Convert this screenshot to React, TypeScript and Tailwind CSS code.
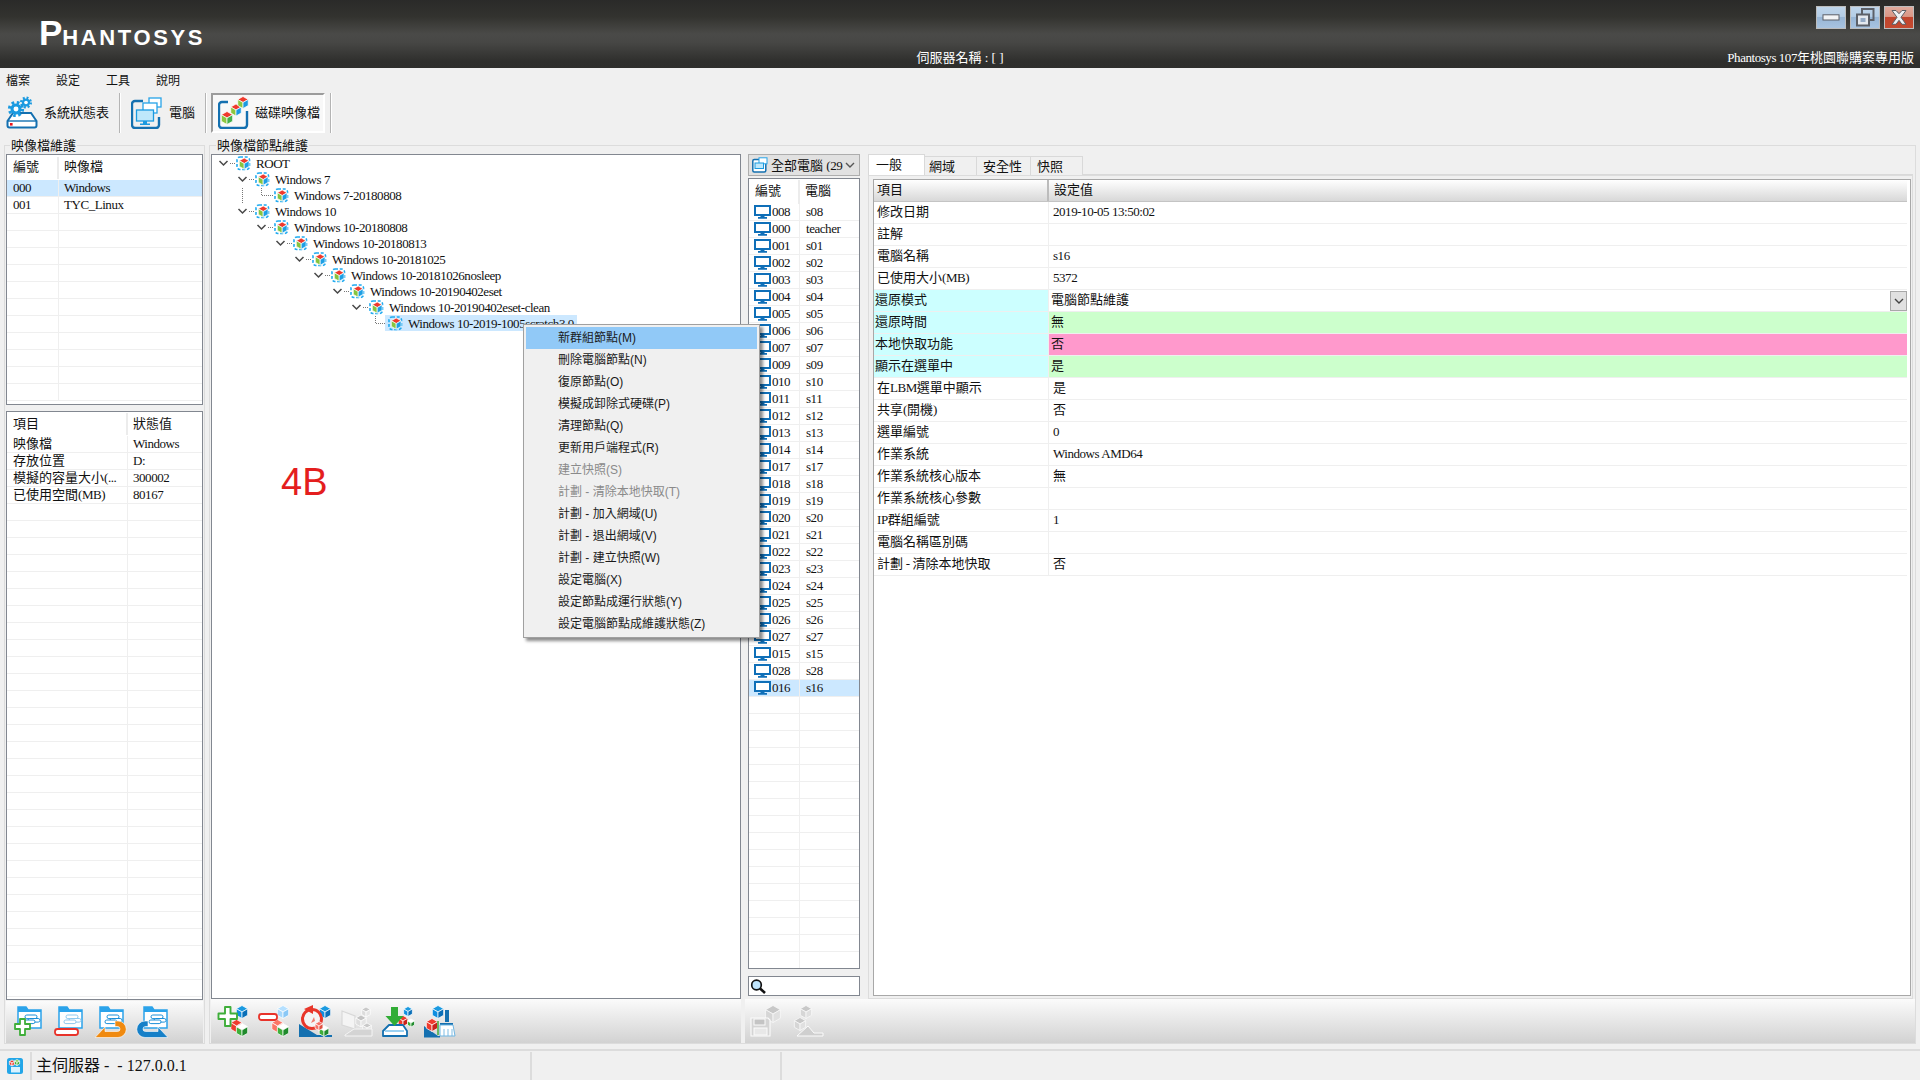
import React from "react";

const BL = "#1b9ae0", RD = "#ee3b2e", GR = "#3fae3a", DK = "#1470b0";

function T({ s }: { s: string }) {
  return (
    <>
      {s.split(/([\x00-\x7f]+)/).map((p, i) =>
        p === "" ? null : /^[\x00-\x7f]/.test(p) ? (
          <span key={i} className="tracking-[-0.45px]">{p}</span>
        ) : (
          <span key={i}>{p}</span>
        )
      )}
    </>
  );
}

function Cube({ x, y, r, t = RD, a = "#8cc63f", b = BL, line = "#fff" }: { x: number; y: number; r: number; t?: string; a?: string; b?: string; line?: string }) {
  const w = r * 0.87, h = r * 0.5;
  return (
    <g stroke={line} strokeWidth={0.7} strokeLinejoin="round">
      <polygon fill={t} points={`${x},${y - r} ${x + w},${y - h} ${x},${y} ${x - w},${y - h}`} />
      <polygon fill={a} points={`${x - w},${y - h} ${x},${y} ${x},${y + r} ${x - w},${y + h}`} />
      <polygon fill={b} points={`${x + w},${y - h} ${x},${y} ${x},${y + r} ${x + w},${y + h}`} />
    </g>
  );
}

function Gear({ x, y, r }: { x: number; y: number; r: number }) {
  const c = 2 * Math.PI * r;
  return (
    <g>
      <circle cx={x} cy={y} r={r} fill="none" stroke={BL} strokeWidth={r * 0.5} strokeDasharray={`${c / 16} ${c / 16}`} />
      <circle cx={x} cy={y} r={r * 0.85} fill={BL} />
      <circle cx={x} cy={y} r={r * 0.38} fill="#fff" />
    </g>
  );
}

function TreeIcon() {
  return (
    <svg width="15" height="15" viewBox="0 0 15 15" className="shrink-0">
      <rect x="1" y="1" width="12.5" height="12.5" rx="3" fill="none" stroke="#1faaf0" strokeWidth="1.6" strokeDasharray="3 1.7" />
      <Cube x={8.2} y={7.6} r={5.6} t="#ef3a2d" a="#86c440" b="#1d9fe4" />
    </svg>
  );
}

function Monitor() {
  return (
    <svg width="17" height="14" viewBox="0 0 17 14" className="shrink-0">
      <rect x="1" y="1" width="15" height="9" fill="#fff" stroke="#0f6fb8" strokeWidth="2" />
      <path d="M6.5 10.5h4v1.5h-4zM4 12h9v1.7H4z" fill="#0f6fb8" />
    </svg>
  );
}

function TbGears() {
  return (
    <svg width="32" height="33" viewBox="0 0 32 33">
      <path d="M1.5 25 7 17H25l5.5 8v4.5a2 2 0 0 1-2 2h-25a2 2 0 0 1-2-2z" fill="#fff" stroke={DK} strokeWidth="2" />
      <path d="M2 25h28" stroke={DK} strokeWidth="1.4" />
      <rect x="4" y="27" width="2.6" height="2.6" fill="#e8141c" />
      <Gear x={10} y={13} r={6.5} />
      <Gear x={20} y={6.5} r={4.8} />
    </svg>
  );
}

function TbMonitors() {
  return (
    <svg width="31" height="32" viewBox="0 0 31 32">
      <path d="M12 4H4a3 3 0 0 0-3 3v21a3 3 0 0 0 3 3h21a3 3 0 0 0 3-3v-8" fill="none" stroke={DK} strokeWidth="2.4" />
      <rect x="18" y="1" width="12" height="9" fill="#fff" stroke="#27a4e8" strokeWidth="1.3" />
      <rect x="12" y="6" width="14" height="10" fill="#fff" stroke="#27a4e8" strokeWidth="1.3" />
      <rect x="5.5" y="13" width="17" height="11" fill="#bfe8fb" stroke="#1b9ae0" strokeWidth="1.3" />
      <path d="M12 24h4v2.5h-4zM9 26.5h10V28H9z" fill="#1b9ae0" />
    </svg>
  );
}

function TbDisks() {
  return (
    <svg width="31" height="33" viewBox="0 0 31 33">
      <path d="M10 6H4a3 3 0 0 0-3 3v20a3 3 0 0 0 3 3h22a3 3 0 0 0 3-3V15" fill="none" stroke={DK} strokeWidth="2.4" />
      <Cube x={9} y={22} r={6.5} t="#ef3a2d" a="#8cc63f" b="#45b04a" />
      <Cube x={18} y={14} r={6} t="#ef3a2d" a="#8cc63f" b={BL} />
      <Cube x={25} y={6.5} r={6} t="#ef3a2d" a="#8cc63f" b={BL} />
    </svg>
  );
}

function Folder({ faded = false }: { faded?: boolean }) {
  const c = faded ? "#8fc9ee" : "#1b8fd8";
  return (
    <g>
      <path d="M5 1h8l2 3h13v18H5z" fill="#fff" stroke="#2ba3ea" strokeWidth="1.5" />
      <path d="M5 1h8l2 3h13v2H5z" fill="#2ba3ea" />
      <rect x="12" y="9" width="12" height="3.6" rx="1.8" fill="#fff" stroke={c} strokeWidth="1" />
      <rect x="15" y="12.5" width="12" height="3.6" rx="1.8" fill="#fff" stroke={c} strokeWidth="1" />
      <rect x="10" y="14" width="12" height="3.6" rx="1.8" fill="#fff" stroke={c} strokeWidth="1" />
    </g>
  );
}

function FolderAdd() {
  return (
    <svg width="32" height="33" viewBox="0 0 32 33">
      <Folder />
      <path d="M7 13h5v5h5v5h-5v6H7v-6H2v-5h5z" fill="#fff" stroke={GR} strokeWidth="1.8" strokeLinejoin="round" />
    </svg>
  );
}
function FolderRemove() {
  return (
    <svg width="32" height="33" viewBox="0 0 32 33">
      <Folder faded />
      <rect x="1" y="23" width="23" height="6" rx="2.5" fill="#fff" stroke="#e8332a" strokeWidth="1.8" />
    </svg>
  );
}
const ARROW = "M0 31.5 L10 21 V25.5 H22.5 a2.5 2.5 0 0 0 0-5 H20 V15 H23 a8.2 8.2 0 0 1 0 16.5z";
function FolderArrow({ color, flip }: { color: string; flip?: boolean }) {
  return (
    <svg width="32" height="33" viewBox="0 0 32 33">
      <g transform={flip ? "translate(3 0)" : undefined}>
        <Folder />
      </g>
      <g transform={flip ? "translate(32 0) scale(-1 1)" : undefined}>
        <path d={ARROW} fill={color} stroke="#fff" strokeWidth="0.6" />
      </g>
    </svg>
  );
}

function CubeAdd() {
  return (
    <svg width="32" height="33" viewBox="0 0 32 33">
      <Cube x={25} y={7} r={6.5} t={BL} a="#0f8ee0" b="#0a6fb8" />
      <Cube x={19.5} y={21} r={6.5} t={RD} a={RD} b="#c8221c" />
      <Cube x={25} y={25} r={6.5} t="#ffffff" a={GR} b="#1f8a2c" />
      <path d="M8 2h5.5v6.5H20V14h-6.5v7H8v-7H1.5V8.5H8z" fill="#fff" stroke={GR} strokeWidth="1.9" strokeLinejoin="round" />
    </svg>
  );
}
function CubeRemove() {
  return (
    <svg width="32" height="33" viewBox="0 0 32 33">
      <Cube x={25} y={7} r={6.5} t="#b5e0ff" a="#a6d8fb" b="#8ac8f6" />
      <Cube x={19.5} y={21} r={6.5} t="#fb7565" a="#fb7565" b="#ea5a4a" />
      <Cube x={25} y={25} r={6.5} t="#fff" a={GR} b="#1f8a2c" />
      <rect x="1" y="9" width="18" height="6" rx="2.5" fill="#fff" stroke="#e8332a" strokeWidth="1.8" />
    </svg>
  );
}
function CubeRestore() {
  return (
    <svg width="33" height="33" viewBox="0 0 33 33">
      <path d="M0 19 18 30 33 30V32H0z" fill={DK} />
      <Cube x={26} y={7} r={6.5} t={BL} a="#0f8ee0" b="#0a6fb8" />
      <circle cx="13" cy="14" r="9.5" fill="#f4f4f4" stroke="#e8362a" strokeWidth="3" />
      <path d="M5 4 14 0v9z" fill="#e8362a" />
      <path d="M12 18l3-6 1 4z" fill="#f07a6e" />
      <Cube x={25} y={26} r={5.5} t="#fff" a={GR} b="#1f8a2c" />
      <Cube x={20} y={21} r={4.5} t="#f67065" a="#f67065" b="#e05040" />
    </svg>
  );
}
function CubeDisabled() {
  return (
    <svg width="32" height="33" viewBox="0 0 32 33">
      <path d="M1 6l13 5v13L1 20z" fill="#f4f4f4" stroke="#d8d8d8" strokeWidth="1.2" />
      <Cube x={25} y={7} r={5} t="#c9c9c9" a="#dcdcdc" b="#e6e6e6" />
      <Cube x={20} y={16} r={6} t="#c4c4c4" a="#dddddd" b="#e4e4e4" />
      <Cube x={26} y={23} r={5} t="#c9c9c9" a="#dcdcdc" b="#e6e6e6" />
      <path d="M4 30l9-6h18v7H4z" fill="#d4d4d4" stroke="#f5f5f5" strokeWidth="1" />
    </svg>
  );
}
function CubeDownload() {
  return (
    <svg width="33" height="33" viewBox="0 0 33 33">
      <Cube x={26} y={6.5} r={5} t={BL} a="#0f8ee0" b="#0a6fb8" />
      <Cube x={21} y={16} r={5.5} t={RD} a={RD} b="#c8221c" />
      <Cube x={29} y={18} r={4} t="#fff" a={GR} b="#1f8a2c" />
      <path d="M1 31v-5l6-6h14l4 6v5z" fill="#fff" stroke={DK} strokeWidth="1.8" strokeLinejoin="round" />
      <path d="M3 26h19" stroke="#9bd1f2" strokeWidth="2" />
      <path d="M9 2h7v9h5.5L12.5 21 3.5 11H9z" fill="#31ad36" />
    </svg>
  );
}
function CubeClean() {
  return (
    <svg width="33" height="33" viewBox="0 0 33 33">
      <path d="M0 21 14 31H0z" fill={DK} />
      <Cube x={14} y={7} r={6.5} t={BL} a="#0f8ee0" b="#0a6fb8" />
      <Cube x={8} y={20} r={6.5} t={RD} a={RD} b="#c8221c" />
      <path d="M14 16v14" stroke="#3fae3a" strokeWidth="1.5" />
      <path d="M21 5h4v12h-4zM16 18h13v2H16z" fill={DK} />
      <path d="M16 20h13l2 11H16z" fill="#fff" stroke="#6fb5e2" strokeWidth="1" />
      <path d="M20 24v7M24 24v7M28 24v7" stroke="#6fb5e2" strokeWidth="0.9" />
      <path d="M0 31h16v1.5H0z" fill={DK} />
    </svg>
  );
}
function DisabledSave() {
  return (
    <svg width="33" height="33" viewBox="0 0 33 33">
      <Cube x={23} y={9} r={8.5} t="#c8c8c8" a="#d6d6d6" b="#e0e0e0" line="#fbfbfb" />
      <path d="M1 13h17l2 2v16H1z" fill="#d4d4d4" stroke="#fbfbfb" strokeWidth="1.1" />
      <rect x="4" y="14" width="11" height="6" fill="#c4c4c4" stroke="#fbfbfb" strokeWidth="1" />
      <rect x="4" y="23" width="13" height="7" fill="#e8e8e8" stroke="#fbfbfb" strokeWidth="1" />
    </svg>
  );
}
function DisabledCubes() {
  return (
    <svg width="33" height="33" viewBox="0 0 33 33">
      <Cube x={14} y={7} r={6.5} t="#c8c8c8" a="#d6d6d6" b="#e0e0e0" line="#fbfbfb" />
      <Cube x={8} y={19} r={6.5} t="#c8c8c8" a="#d6d6d6" b="#e0e0e0" line="#fbfbfb" />
      <path d="M5 31l11-10 6 7h9v3z" fill="#cfcfcf" stroke="#fbfbfb" strokeWidth="1" />
    </svg>
  );
}

function StatusIcon() {
  return (
    <svg width="16" height="16" viewBox="0 0 16 16">
      <rect width="16" height="16" rx="2.5" fill="#23a6e8" />
      <rect x="4" y="9" width="9" height="5.5" fill="#d8f2ff" />
      <Cube x={5} y={5} r={3} t={RD} a={RD} b={RD} line="#fff" />
      <Cube x={10} y={4.5} r={3} t="#7ac943" a="#3fae3a" b="#3fae3a" line="#fff" />
    </svg>
  );
}

function Chevron({ color = "#444" }: { color?: string }) {
  return (
    <svg width="10" height="6" viewBox="0 0 10 6">
      <path d="M1 1l4 4 4-4" fill="none" stroke={color} strokeWidth="1.4" />
    </svg>
  );
}

function Search() {
  return (
    <svg width="17" height="15" viewBox="0 0 17 15">
      <circle cx="6.5" cy="6" r="4.8" fill="#bfe4fb" stroke="#111" strokeWidth="1.7" />
      <path d="M10 9.5l5 4.5" stroke="#111" strokeWidth="2.6" />
    </svg>
  );
}

function WinBtn({ kind }: { kind: "min" | "max" | "close" }) {
  if (kind === "close")
    return (
      <div className="w-[30px] h-[23px] border border-[#bdbdbd] bg-[linear-gradient(#dfa99c_0%,#d99786_45%,#c0452d_50%,#c44a30_100%)] flex items-center justify-center">
        <svg width="20" height="17" viewBox="0 0 20 17">
          <path d="M3 1.5h4l3 3.2 3-3.2h4l-5 6.8 5 7h-4l-3-4-3 4H3l5-7z" fill="#eef0f3" stroke="#5c5f66" strokeWidth="1" strokeLinejoin="round" />
        </svg>
      </div>
    );
  return (
    <div className="w-[30px] h-[23px] border border-[#bdbdbd] bg-[linear-gradient(#bfd5ea_0%,#b4cde6_45%,#98b6d6_50%,#a8c3e0_100%)] flex items-center justify-center">
      {kind === "min" ? (
        <svg width="18" height="7" viewBox="0 0 18 7">
          <rect x="1" y="0.8" width="16" height="5.2" fill="#f2f4f6" stroke="#5c6068" strokeWidth="1" />
        </svg>
      ) : (
        <svg width="20" height="19" viewBox="0 0 20 19">
          <rect x="7" y="1" width="11.5" height="11" fill="none" stroke="#5c6068" strokeWidth="2" />
          <rect x="2" y="6.5" width="12" height="11" fill="#e4e8ee" stroke="#5c6068" strokeWidth="2" />
          <rect x="5.5" y="10" width="5" height="4" fill="#93a9c4" />
        </svg>
      )}
    </div>
  );
}

function ToolSep() {
  return <div className="w-[2px] h-[40px] bg-[#b4b4b4] border-r border-white shrink-0" />;
}

const leftRows: [string, string][] = [["000", "Windows"], ["001", "TYC_Linux"]];
const infoRows: [string, string][] = [["映像檔", "Windows"], ["存放位置", "D:"], ["模擬的容量大小(...", "300002"], ["已使用空間(MB)", "80167"]];

function SmallList({ head, rows, col, total, selected, className, headH }: { head: [string, string]; rows: [string, string][]; col: string; total: number; selected?: number; className: string; headH: string }) {
  const blank = Array.from({ length: total - rows.length }, (_, i) => i);
  return (
    <div className={`border border-[#828790] bg-white overflow-hidden ${className}`}>
      <div className={`flex items-center ${headH}`}>
        <div className={`${col} h-[22px] pl-[6px] pb-[2px] flex items-center border-r-2 border-[#ececec]`}>{head[0]}</div>
        <div className="flex-1 pl-[5px] pb-[2px]">{head[1]}</div>
      </div>
      {rows.map((r, i) => (
        <div key={i} className={`flex h-[17px] border-b border-[#efefef] ${selected === i ? "bg-[#cce8ff]" : ""}`}>
          <div className={`${col} pl-[6px] pb-[2px] flex items-center border-r border-[#efefef]`}><span><T s={r[0]} /></span></div>
          <div className="flex-1 pl-[5px] pb-[2px] flex items-center"><span><T s={r[1]} /></span></div>
        </div>
      ))}
      {blank.map((i) => (
        <div key={i} className="flex h-[17px] border-b border-[#efefef]">
          <div className={`${col} border-r border-[#efefef]`} />
        </div>
      ))}
    </div>
  );
}

const tree: { label: string; d: number; leaf?: boolean; sib?: boolean; sel?: boolean }[] = [
  { label: "ROOT", d: 0 },
  { label: "Windows 7", d: 1 },
  { label: "Windows 7-20180808", d: 2, leaf: true, sib: true },
  { label: "Windows 10", d: 1 },
  { label: "Windows 10-20180808", d: 2 },
  { label: "Windows 10-20180813", d: 3 },
  { label: "Windows 10-20181025", d: 4 },
  { label: "Windows 10-20181026nosleep", d: 5 },
  { label: "Windows 10-20190402eset", d: 6 },
  { label: "Windows 10-20190402eset-clean", d: 7 },
  { label: "Windows 10-2019-1005scratch3.0", d: 8, leaf: true, sel: true },
];

function TreeRow({ n }: { n: (typeof tree)[number] }) {
  const w = 21 + 19 * n.d;
  const cx = 9 + 19 * n.d;
  return (
    <div className="flex h-[16px] items-center pl-[3px]">
      <svg width={w} height={16} className="shrink-0">
        {n.leaf ? (
          <path d={`M${cx - 0.5} 1V8.5H${w}`} fill="none" stroke="#777" strokeDasharray="1 1" />
        ) : (
          <>
            <path d={`M${cx - 4.5} 6l4 4 4-4`} fill="none" stroke="#484848" strokeWidth="1.5" />
            <path d={`M${cx + 6} 8.5H${w}`} fill="none" stroke="#777" strokeDasharray="1 1" />
          </>
        )}
        {n.sib && <path d={`M${cx - 19.5} 1V16`} fill="none" stroke="#777" strokeDasharray="1 1" />}
      </svg>
      <div className={`flex items-center h-[16px] pl-[3px] pr-[3px] -ml-[3px] ${n.sel ? "bg-[#cce8ff]" : ""}`}>
        <TreeIcon />
        <span className="ml-[5px] whitespace-nowrap tracking-[-0.45px]">{n.label}</span>
      </div>
    </div>
  );
}

const computers: [string, string][] = [
  ["008", "s08"], ["000", "teacher"], ["001", "s01"], ["002", "s02"], ["003", "s03"], ["004", "s04"], ["005", "s05"], ["006", "s06"], ["007", "s07"], ["009", "s09"],
  ["010", "s10"], ["011", "s11"], ["012", "s12"], ["013", "s13"], ["014", "s14"], ["017", "s17"], ["018", "s18"], ["019", "s19"], ["020", "s20"], ["021", "s21"],
  ["022", "s22"], ["023", "s23"], ["024", "s24"], ["025", "s25"], ["026", "s26"], ["027", "s27"], ["015", "s15"], ["028", "s28"], ["016", "s16"],
];

type Prop = { k: string; v: string; kc?: string; vc?: string; combo?: boolean };
const props: Prop[] = [
  { k: "修改日期", v: "2019-10-05 13:50:02" },
  { k: "註解", v: "" },
  { k: "電腦名稱", v: "s16" },
  { k: "已使用大小(MB)", v: "5372" },
  { k: "還原模式", v: "電腦節點維護", kc: "bg-[#ccffff]", combo: true },
  { k: "還原時間", v: "無", kc: "bg-[#ccffff]", vc: "bg-[#ccffcc]" },
  { k: "本地快取功能", v: "否", kc: "bg-[#ccffff]", vc: "bg-[#ff99cc]" },
  { k: "顯示在選單中", v: "是", kc: "bg-[#ccffff]", vc: "bg-[#ccffcc]" },
  { k: "在LBM選單中顯示", v: "是" },
  { k: "共享(開機)", v: "否" },
  { k: "選單編號", v: "0" },
  { k: "作業系統", v: "Windows AMD64" },
  { k: "作業系統核心版本", v: "無" },
  { k: "作業系統核心參數", v: "" },
  { k: "IP群組編號", v: "1" },
  { k: "電腦名稱區別碼", v: "" },
  { k: "計劃 - 清除本地快取", v: "否" },
];

const menu: [string, boolean?][] = [
  ["新群組節點(M)"], ["刪除電腦節點(N)"], ["復原節點(O)"], ["模擬成卸除式硬碟(P)"], ["清理節點(Q)"], ["更新用戶端程式(R)"],
  ["建立快照(S)", true], ["計劃 - 清除本地快取(T)", true], ["計劃 - 加入網域(U)"], ["計劃 - 退出網域(V)"], ["計劃 - 建立快照(W)"],
  ["設定電腦(X)"], ["設定節點成運行狀態(Y)"], ["設定電腦節點成維護狀態(Z)"],
];

export default function App() {
  return (
    <div className="relative w-[1920px] h-[1080px] overflow-hidden flex flex-col bg-[#f0f0f0] text-[#111] text-[13px] leading-none font-['Liberation_Serif','Noto_Sans_CJK_TC',serif]">
      {/* title bar */}
      <div className="h-[68px] shrink-0 grid grid-cols-3 text-white bg-[linear-gradient(#2a2a29_0%,#33332f_25%,#4a4a48_50%,#474745_62%,#2f2f2d_90%,#2e2e2c_100%)]">
        <div className="pl-[39px] pt-[15px]">
          <div className="flex items-baseline font-['Liberation_Sans',sans-serif] font-bold leading-none h-[32px]">
            <span className="text-[35px]">P</span>
            <span className="text-[22px] tracking-[2.6px]">HANTOSYS</span>
          </div>
        </div>
        <div className="flex items-end justify-center pb-[4px]"><span>伺服器名稱 : [ ]</span></div>
        <div className="flex flex-col items-end justify-between pr-[6px] pt-[6px] pb-[4px]">
          <div className="flex gap-[4px]">
            <WinBtn kind="min" />
            <WinBtn kind="max" />
            <WinBtn kind="close" />
          </div>
          <div><T s="Phantosys 107" />年桃園聯購案專用版</div>
        </div>
      </div>

      {/* menu */}
      <div className="h-[24px] shrink-0 flex items-center pl-[6px] pt-[2px] gap-[26px] text-[12px] font-['Liberation_Sans','Noto_Sans_CJK_TC',sans-serif]">
        <span>檔案</span>
        <span>設定</span>
        <span>工具</span>
        <span>說明</span>
      </div>

      {/* toolbar */}
      <div className="h-[41px] shrink-0 flex items-center">
        <div className="w-[119px] flex items-center pl-[6px] gap-[6px]">
          <TbGears />
          <span>系統狀態表</span>
        </div>
        <ToolSep />
        <div className="w-[84px] flex items-center pl-[10px] gap-[7px]">
          <TbMonitors />
          <span>電腦</span>
        </div>
        <ToolSep />
        <div className="ml-[4px] w-[114px] h-[40px] flex items-center pl-[5px] gap-[6px] border-2 border-t-[#9c9c9c] border-l-[#9c9c9c] border-b-white border-r-white bg-[#f8f8f8]">
          <TbDisks />
          <span>磁碟映像檔</span>
        </div>
        <div className="w-[5px]" />
        <ToolSep />
      </div>

      {/* main */}
      <div className="flex-1 min-h-0 flex pl-[4px] pr-[4px] pt-[12px] pb-[5px] gap-[4px]">
        {/* left group */}
        <div className="w-[201px] shrink-0 border border-[#dcdcdc] flex flex-col">
          <div className="-mt-[9px] ml-[5px] h-[16px] w-fit bg-[#f0f0f0] flex items-center px-[1px]">映像檔維護</div>
          <div className="mt-[1px] mx-[1px] flex flex-col gap-[6px]">
            <SmallList head={["編號", "映像檔"]} rows={leftRows} col="w-[52px]" total={13} selected={0} className="h-[251px]" headH="h-[25px]" />
            <SmallList head={["項目", "狀態值"]} rows={infoRows} col="w-[121px]" total={34} className="h-[589px]" headH="h-[24px]" />
          </div>
          <div className="mt-[1px] mx-[1px] flex-1 flex items-center pl-[7px] gap-[9px] bg-[linear-gradient(#fbfbfb,#d2d2d2)]">
            <FolderAdd />
            <FolderRemove />
            <FolderArrow color="#f08a10" />
            <FolderArrow color="#1680c8" flip />
          </div>
        </div>

        {/* main group */}
        <div className="flex-1 min-w-0 border border-[#dcdcdc] flex flex-col">
          <div className="-mt-[9px] ml-[6px] h-[16px] w-fit bg-[#f0f0f0] flex items-center px-[1px]">映像檔節點維護</div>
          <div className="mt-[1px] flex h-[845px] pl-[1px]">
            {/* tree */}
            <div className="w-[530px] shrink-0 border border-[#828790] bg-white overflow-hidden">
              {tree.map((n) => (
                <TreeRow key={n.label} n={n} />
              ))}
            </div>

            {/* computers */}
            <div className="ml-[7px] w-[112px] shrink-0 flex flex-col">
              <div className="h-[22px] shrink-0 border border-[#adadad] bg-[#e1e1e1] flex items-center pl-[3px] pr-[4px]">
                <svg width="16" height="16" viewBox="0 0 16 16" className="shrink-0">
                  <rect x="0.8" y="2.5" width="13" height="12.5" rx="1.5" fill="#fff" stroke={DK} strokeWidth="1.5" />
                  <rect x="7" y="0.8" width="8" height="6" fill="#fff" stroke="#27a4e8" strokeWidth="1" />
                  <rect x="3" y="6" width="8.5" height="5.5" fill="#bfe8fb" stroke="#1b9ae0" strokeWidth="1" />
                </svg>
                <span className="ml-[3px] flex-1 overflow-hidden whitespace-nowrap">全部電腦 <T s="(29" /></span>
                <span className="ml-[2px]"><Chevron color="#555" /></span>
              </div>
              <div className="mt-[2px] h-[791px] shrink-0 border border-[#828790] bg-white overflow-hidden">
                <div className="flex h-[25px] items-center">
                  <div className="w-[51px] h-[24px] pl-[6px] pb-[2px] flex items-center border-r-2 border-[#ececec]">編號</div>
                  <div className="flex-1 pl-[5px] pb-[2px]">電腦</div>
                </div>
                {Array.from({ length: 46 }, (_, i) => {
                  const c = computers[i];
                  return (
                    <div key={i} className={`flex h-[17px] border-b border-[#efefef] ${i === 28 ? "bg-[#cce8ff]" : ""}`}>
                      <div className="w-[51px] pl-[5px] flex items-center border-r border-[#efefef]">
                        {c && <Monitor />}
                        {c && <span className="ml-[1px] pb-[1px] tracking-[-0.45px]">{c[0]}</span>}
                      </div>
                      {c && <div className="flex-1 pl-[6px] pb-[1px] flex items-center tracking-[-0.45px]">{c[1]}</div>}
                    </div>
                  );
                })}
              </div>
              <div className="mt-[7px] h-[20px] shrink-0 border border-[#828790] bg-white flex items-center pl-[1px]">
                <Search />
              </div>
            </div>

            {/* tabs */}
            <div className="ml-[8px] flex-1 min-w-0 flex flex-col pr-[2px]">
              <div className="h-[21px] shrink-0 flex items-end">
                <div className="w-[57px] h-[21px] bg-white border-t border-x border-[#d9d9d9] pl-[7px] pb-[1px] flex items-center">一般</div>
                <div className="w-[52px] h-[19px] border-t border-r border-[#d9d9d9] pl-[4px] flex items-center">網域</div>
                <div className="w-[54px] h-[19px] border-t border-r border-[#d9d9d9] pl-[6px] flex items-center">安全性</div>
                <div className="w-[52px] h-[19px] border-t border-r border-[#d9d9d9] pl-[6px] flex items-center">快照</div>
                <div className="flex-1 h-[19px] border-b border-[#d9d9d9]" />
              </div>
              <div className="flex-1 min-h-0 border border-[#dcdcdc] bg-[#f0f0f0] pt-[3px] pl-[4px] pr-[1px] pb-[2px] flex">
                <div className="flex-1 min-w-0 border border-[#a8a8a8] bg-white overflow-hidden pr-[3px]">
                  <div className="flex h-[22px] bg-[linear-gradient(#ffffff,#d8d8d8)] border-b border-[#c4c4c4]">
                    <div className="w-[175px] pl-[3px] pb-[2px] flex items-center border-r-2 border-[#bcbcbc]">項目</div>
                    <div className="flex-1 pl-[5px] pb-[2px] flex items-center">設定值</div>
                  </div>
                  {props.map((p) => (
                    <div key={p.k} className="flex h-[22px] border-b border-[#efefef]">
                      <div className={`w-[175px] pb-[3px] flex items-center border-r border-[#efefef] ${p.kc ? `pl-[1px] ${p.kc}` : "pl-[3px]"}`}><span><T s={p.k} /></span></div>
                      <div className={`flex-1 min-w-0 flex items-center justify-between ${p.kc ? "pl-[2px]" : "pl-[4px]"} ${p.vc ?? ""}`}>
                        <span className="pb-[3px]"><T s={p.v} /></span>
                        {p.combo && (
                          <div className="w-[17px] h-[20px] border border-[#a8a8a8] bg-[#e1e1e1] flex items-center justify-center">
                            <Chevron color="#444" />
                          </div>
                        )}
                      </div>
                    </div>
                  ))}
                </div>
              </div>
            </div>
          </div>

          {/* bottom toolbars */}
          <div className="flex flex-1 min-h-0 pl-[1px]">
            <div className="w-[530px] shrink-0 flex items-center pl-[6px] gap-[9px] bg-[linear-gradient(#fbfbfb,#d2d2d2)]">
              <CubeAdd />
              <CubeRemove />
              <CubeRestore />
              <CubeDisabled />
              <CubeDownload />
              <CubeClean />
            </div>
            <div className="ml-[4px] flex-1 flex items-center pl-[5px] gap-[9px] bg-[linear-gradient(#fbfbfb,#d2d2d2)]">
              <DisabledSave />
              <DisabledCubes />
            </div>
          </div>
        </div>
      </div>

      {/* status bar */}
      <div className="h-[31px] shrink-0 border-t-2 border-[#dcdcdc] flex text-[16px] pt-[1px]">
        <div className="w-[32px] flex items-center pl-[7px] border-r-2 border-[#dcdcdc]">
          <StatusIcon />
        </div>
        <div className="w-[500px] flex items-center pl-[4px] border-r-2 border-[#dcdcdc]">主伺服器 -&nbsp;&nbsp;- 127.0.0.1</div>
        <div className="w-[250px] border-r-2 border-[#dcdcdc]" />
      </div>

      {/* context menu */}
      <div className="absolute left-[523px] top-[324px] w-[237px] h-[314px] border border-[#a0a0a0] bg-[#f0f0f0] p-[2px] shadow-[3px_3px_3px_rgba(0,0,0,0.45)] text-[12px] font-['Liberation_Sans','Noto_Sans_CJK_TC',sans-serif]">
        {menu.map(([t, dis], i) => (
          <div key={t} className={`h-[22px] flex items-center pl-[32px] ${i === 0 ? "bg-[#91c9f7]" : ""} ${dis ? "text-[#8a8a8a]" : "text-[#1a1a1a]"}`}>
            {t}
          </div>
        ))}
      </div>

      {/* annotation */}
      <div className="absolute left-[281px] top-[463px] text-[38px] leading-none text-[#e41e1e] font-['Liberation_Sans',sans-serif]">4B</div>
    </div>
  );
}
